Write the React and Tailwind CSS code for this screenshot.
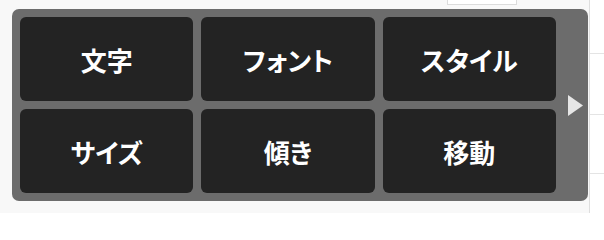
const LABELS = ['文字', 'フォント', 'スタイル', 'サイズ', '傾き', '移動'];

export default function App() {
  return (
    <div className="relative flex h-[213px] w-[604px] overflow-hidden bg-[#f8f8f8] font-['Noto_Sans_CJK_JP','Noto_Sans',sans-serif]">
      {/* background fragment behind the toolbar */}
      <div className="absolute left-[447px] top-[-2px] h-[7px] w-[70px] border border-[#dcdcdc] bg-white" />

      <div className="relative flex w-[589px] shrink-0 items-start pl-[12px] pt-[9px]">
        <div className="flex h-[192px] w-[576px] items-stretch rounded-[7px] bg-[#6c6c6c] pl-[8px] pt-[8px]">
          <div className="grid h-[176px] w-[536px] grid-cols-3 grid-rows-2 gap-[8px]">
            {LABELS.map(label => (
              <button
                key={label}
                className="flex items-center justify-center rounded-[6px] bg-[#232323] pt-[1px] text-[26px] font-bold leading-none text-white [font-feature-settings:'palt']"
              >
                {label}
              </button>
            ))}
          </div>
          <div className="flex flex-1 items-center justify-center pb-[8px] pl-[7px]">
            <svg width="15" height="21" viewBox="0 0 15 21">
              <path d="M0 0 L15 10.5 L0 21 Z" fill="#e6e6e6" />
            </svg>
          </div>
        </div>
      </div>

      <div className="flex flex-1 flex-col border-l border-[#dedede] bg-white">
        <div className="h-[54px] border-b border-[#e4e4e4]" />
        <div className="h-[61px] border-b border-[#e4e4e4]" />
        <div className="h-[59px] border-b border-[#e4e4e4]" />
      </div>
    </div>
  );
}
